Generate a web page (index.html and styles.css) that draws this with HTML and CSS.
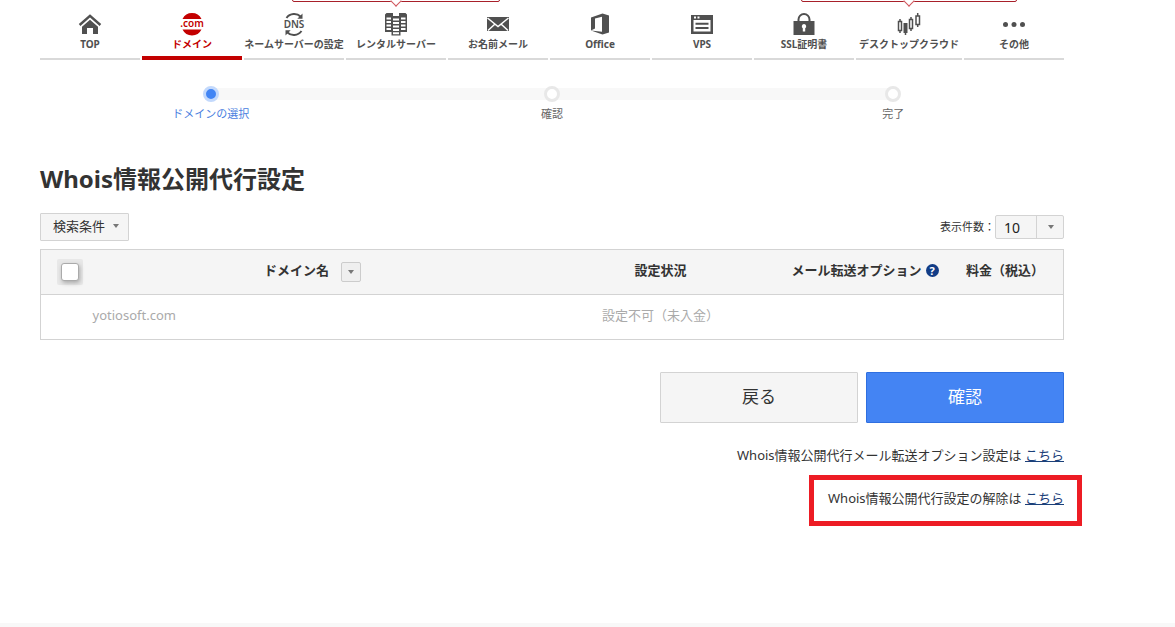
FILE: index.html
```html
<!DOCTYPE html>
<html lang="ja">
<head>
<meta charset="utf-8">
<title>Whois情報公開代行設定</title>
<link rel="stylesheet" href="styles.css">
</head>
<body>
<div class="page">
  <nav class="gnav">
    <a class="gnav-item" href="#">
      <svg class="gnav-icon" viewBox="0 0 24 24"><path d="M1.600 13 12 3.800 22.400 13" fill="none" stroke="currentColor" stroke-width="2.400"/><path d="M12 7.800 4 14.800V22h5v-6h6v6h5v-7.200z" fill="currentColor"/></svg>
      <span>TOP</span>
    </a>
    <a class="gnav-item is-current" href="#">
      <svg class="gnav-icon" viewBox="0 0 24 24"><path d="M2.500 7a10.600 10.600 0 0 1 19 0zM2.500 17.500a10.600 10.600 0 0 0 19 0z" fill="currentColor"/><text x="12" y="15" text-anchor="middle" class="icon-text">.com</text></svg>
      <span>ドメイン</span>
    </a>
    <a class="gnav-item" href="#">
      <svg class="gnav-icon" viewBox="0 0 24 24"><path d="M4.500 6c3.500-5 10.500-5 14-1.500M19.500 19c-3.500 5-10.500 5-14 1.500" fill="none" stroke="currentColor" stroke-width="2"/><path d="M20.500 1.500v5.300h-5.200zM3.500 23.500v-5.300h5.200z" fill="currentColor"/><text x="12" y="16" text-anchor="middle" class="icon-text">DNS</text></svg>
      <span>ネームサーバーの設定</span>
    </a>
    <a class="gnav-item" href="#">
      <span class="callout callout-server"></span>
      <svg class="gnav-icon" viewBox="0 0 24 24"><path d="M2.500 1H9v3h6V1h6.500L23 2.500V20h-6.500v3.500h-9V20H1V2.500z" fill="currentColor"/><path d="M2.500 6.500h4.500M2.500 10h4.500M2.500 13.500h4.500M2.500 17h4.500M17 6.500h4.500M17 10h4.500M17 13.500h4.500M17 17h4.500M9 7.500h6M9 11h6M9 14.500h6M9 18h6M9 21.300h6" stroke="#fff" stroke-width="1.900"/></svg>
      <span>レンタルサーバー</span>
    </a>
    <a class="gnav-item" href="#">
      <svg class="gnav-icon" viewBox="0 0 24 24"><path d="M1 5h22v14H1z" fill="currentColor"/><path d="M1.500 6 12 14.500 22.500 6M2 18.500l7-6.500M22 18.500l-7-6.500" fill="none" stroke="#fff" stroke-width="1.500"/></svg>
      <span>お名前メール</span>
    </a>
    <a class="gnav-item" href="#">
      <svg class="gnav-icon" viewBox="0 0 24 24"><path d="M3 5.500 14.500 1.500 21 3.500v17l-6.500 2L3 18.500l11 1.300V4.800L7 6.500v10L3 18.500z" fill="currentColor"/></svg>
      <span>Office</span>
    </a>
    <a class="gnav-item" href="#">
      <svg class="gnav-icon" viewBox="0 0 24 24"><path d="M1 3h22v19H1z" fill="currentColor"/><path d="M3.500 8h17v11.500h-17z" fill="#fff"/><path d="M4 5.500h2M7.500 5.500h2" stroke="#fff" stroke-width="2"/><path d="M5.500 11.800h13M5.500 16h13" stroke="currentColor" stroke-width="2"/></svg>
      <span>VPS</span>
    </a>
    <a class="gnav-item" href="#">
      <svg class="gnav-icon" viewBox="0 0 24 24"><path d="M6.500 10V7.500a5.500 5.500 0 0 1 11 0V10" fill="none" stroke="currentColor" stroke-width="2"/><path d="M1.500 9h21v14h-21z" fill="currentColor"/><path d="M12 12a2.300 2.300 0 0 0-1.200 4.200V19.500h2.400v-3.300A2.300 2.300 0 0 0 12 12z" fill="#fff"/></svg>
      <span>SSL証明書</span>
    </a>
    <a class="gnav-item gnav-wide" href="#">
      <span class="callout callout-cloud"></span>
      <svg class="gnav-icon" viewBox="0 0 24 24"><g fill="none" stroke="currentColor" stroke-width="1.500"><path d="M1.500 9.500h3v9h-3zM12.500 7.500h3v9h-3zM19 4h3.500v8.500H19z"/><path d="M3 7v2.500M3 18.500V21M14 5v2.500M14 16.500V19M20.700 1v3M20.700 12.500V15M8.500 20v3"/></g><path d="M6.500 11h4v10h-4z" fill="currentColor"/></svg>
      <span>デスクトップクラウド</span>
    </a>
    <a class="gnav-item" href="#">
      <svg class="gnav-icon" viewBox="0 0 24 24"><g fill="currentColor"><circle cx="3.500" cy="12.500" r="2.500"/><circle cx="12" cy="12.500" r="2.500"/><circle cx="20.500" cy="12.500" r="2.500"/></g></svg>
      <span>その他</span>
    </a>
  </nav>

  <ol class="steps">
    <li class="step is-active">ドメインの選択</li>
    <li class="step">確認</li>
    <li class="step">完了</li>
  </ol>

  <main>
    <h1>Whois情報公開代行設定</h1>
    <div class="toolbar">
      <button class="filter" type="button">検索条件<span class="caret"></span></button>
      <div class="per-page">
        <label for="count">表示件数：</label>
        <span class="select-box">
          <select id="count"><option>10</option><option>20</option><option>50</option></select>
          <span class="caret"></span>
        </span>
      </div>
    </div>

    <table class="domains">
      <colgroup><col class="col-check"><col class="col-name"><col class="col-status"><col class="col-option"><col class="col-price"></colgroup>
      <thead>
        <tr>
          <th><span class="check-frame"><input type="checkbox" aria-label="すべて選択"></span></th>
          <th><span class="head-name">ドメイン名<button class="sort" type="button" aria-label="並べ替え"><span class="caret"></span></button></span></th>
          <th>設定状況</th>
          <th><span class="head-option">メール転送オプション<button class="help" type="button">?</button></span></th>
          <th>料金（税込）</th>
        </tr>
      </thead>
      <tbody>
        <tr>
          <td></td>
          <td class="name">yotiosoft.com</td>
          <td>設定不可（未入金）</td>
          <td></td>
          <td></td>
        </tr>
      </tbody>
    </table>

    <div class="actions">
      <button class="btn" type="button">戻る</button>
      <button class="btn btn-primary" type="button">確認</button>
    </div>

    <div class="notes">
      <p>Whois情報公開代行メール転送オプション設定は <a href="#">こちら</a></p>
      <p class="marked">Whois情報公開代行設定の解除は <a href="#">こちら</a></p>
    </div>
  </main>
</div>
<footer class="footer"></footer>
</body>
</html>
```

FILE: styles.css
```css
*, *::before, *::after { box-sizing: border-box; }

body {
  margin: 0;
  min-height: 100vh;
  display: flex;
  flex-direction: column;
  background: #fff;
  color: #333;
  font: 13px/20px "Noto Sans", "Noto Sans CJK JP", sans-serif;
}

button, select { font: inherit; color: inherit; }

.page { padding: 0 111px 0 40px; }

.gnav { display: flex; gap: 2px; }

.gnav-item {
  position: relative;
  flex: 100 1 0;
  height: 60px;
  padding-top: 12px;
  display: flex;
  flex-direction: column;
  align-items: center;
  border-bottom: 2px solid #d9d9d9;
  color: #505050;
  font-size: 10px;
  font-weight: 700;
  line-height: 16px;
  text-decoration: none;
  white-space: nowrap;
}
.gnav-wide { flex-grow: 106; }
.gnav-item.is-current { color: #c30000; border-bottom: 4px solid #c30000; }
.gnav-icon { width: 24px; height: 24px; flex: none; overflow: visible; }
.icon-text { font: 600 10px "Noto Sans", sans-serif; fill: currentColor; }

.callout {
  position: absolute;
  top: -8px;
  left: 50%;
  height: 10px;
  border: 1px solid #a8202a;
  border-radius: 2px;
  background: #fff;
  transform: translateX(-50%);
}
.callout-server { width: 208px; }
.callout-cloud { width: 216px; }
.callout::after {
  content: "";
  position: absolute;
  left: 50%;
  bottom: -4px;
  width: 8px;
  height: 8px;
  margin-left: -4px;
  border: solid #d0555c;
  border-width: 0 1px 1px 0;
  background: #fff;
  transform: rotate(45deg);
}

.steps {
  display: grid;
  grid-template-columns: repeat(3, 1fr);
  margin: 26px 0 0;
  padding: 0;
  list-style: none;
  background: linear-gradient(#f8f8f8, #f8f8f8) center 2px / 66% 12px no-repeat;
}
.step {
  display: flex;
  flex-direction: column;
  align-items: center;
  gap: 4px;
  color: #666;
  font-size: 11px;
  line-height: 16px;
}
.step::before {
  content: "";
  width: 16px;
  height: 16px;
  border: 3px solid #e8e8e8;
  border-radius: 50%;
  background: #fff;
}
.step.is-active { color: #4a80e0; }
.step.is-active::before { border-color: #c3d9fc; background: #4285f4; }

h1 { margin: 41px 0 18px; font-size: 24px; line-height: 32px; }

.toolbar { display: flex; justify-content: space-between; align-items: center; margin-bottom: 8px; }

.caret {
  width: 0;
  height: 0;
  border: solid transparent;
  border-width: 4px 3px 0;
  border-top-color: #777;
}

.filter {
  display: flex;
  align-items: center;
  gap: 8px;
  height: 28px;
  padding: 0 9px 2px 12px;
  border: 1px solid #d3d3d3;
  border-radius: 1px;
  background: #f5f5f5;
}

.per-page { display: flex; align-items: center; font-size: 11px; }
.select-box { position: relative; display: flex; }
.select-box select {
  appearance: none;
  width: 69px;
  height: 24px;
  padding: 1px 8px 0;
  border: 1px solid #d3d3d3;
  border-radius: 2px;
  background: linear-gradient(#d3d3d3, #d3d3d3) 40px 0 / 1px 100% no-repeat #f5f5f5;
  color: #222;
  font-size: 14px;
}
.select-box .caret { position: absolute; right: 10px; top: 10px; pointer-events: none; }

.domains {
  width: 100%;
  table-layout: fixed;
  border-collapse: collapse;
  border: 1px solid #d3d3d3;
}
.col-check { width: 4.600%; }
.col-name { width: 44%; }
.col-status { width: 24%; }
.col-option { width: 16%; }
.domains tr { height: 45px; border-bottom: 1px solid #d3d3d3; }
.domains th, .domains td { padding: 0 0 4px; text-align: center; white-space: nowrap; }
.domains th { background: #f5f5f5; }
.domains td { color: #aaa; }
.domains .name { padding-left: 5px; text-align: left; }

.check-frame {
  display: flex;
  width: 26px;
  height: 26px;
  margin: 4px 0 0 16px;
  padding: 4px;
  border-radius: 2px;
  background: #e8e8e8;
}
.check-frame input {
  appearance: none;
  width: 18px;
  height: 18px;
  margin: 0;
  border: 1px solid #aaa;
  border-radius: 3px;
  background: #fff;
  box-shadow: 1px 2px 4px #aaa;
}

.head-name, .head-option { display: inline-flex; align-items: center; }
.head-name { gap: 12px; }
.head-option { gap: 4px; }
.sort {
  display: flex;
  align-items: center;
  justify-content: center;
  width: 20px;
  height: 20px;
  margin-top: 3px;
  padding: 0;
  border: 1px solid #ccc;
  border-radius: 2px;
  background: #efefef;
}
.help {
  width: 13px;
  height: 13px;
  padding: 0;
  border: 0;
  border-radius: 50%;
  background: #123c86;
  color: #fff;
  font-size: 11px;
  font-weight: 700;
  line-height: 13px;
}

.actions { display: flex; justify-content: flex-end; gap: 8px; margin-top: 32px; }
.btn {
  width: 198px;
  height: 51px;
  padding: 0 0 2px;
  border: 1px solid #d3d3d3;
  border-radius: 1px;
  background: #f5f5f5;
  font-size: 17px;
}
.btn-primary { border-color: #2f6fe0; background: #4484f3; color: #fff; }

.notes {
  display: flex;
  flex-direction: column;
  align-items: flex-end;
  gap: 23px;
  margin-top: 22px;
}
.notes p { position: relative; margin: 0; }
.notes a { color: #1b4079; }
.marked::after {
  content: "";
  position: absolute;
  inset: -13px -18px -18px -19px;
  border: 5px solid #ed1c24;
  pointer-events: none;
}

.footer { height: 4px; margin-top: auto; background: #f8f8f8; }
```
